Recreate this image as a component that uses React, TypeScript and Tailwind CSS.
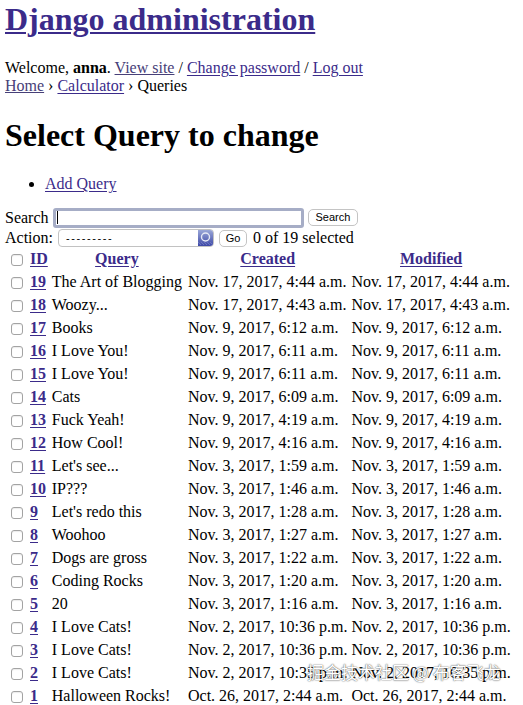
import React from 'react';

const rows: [number, string, string, string][] = [
  [19, 'The Art of Blogging', 'Nov. 17, 2017, 4:44 a.m.', 'Nov. 17, 2017, 4:44 a.m.'],
  [18, 'Woozy...', 'Nov. 17, 2017, 4:43 a.m.', 'Nov. 17, 2017, 4:43 a.m.'],
  [17, 'Books', 'Nov. 9, 2017, 6:12 a.m.', 'Nov. 9, 2017, 6:12 a.m.'],
  [16, 'I Love You!', 'Nov. 9, 2017, 6:11 a.m.', 'Nov. 9, 2017, 6:11 a.m.'],
  [15, 'I Love You!', 'Nov. 9, 2017, 6:11 a.m.', 'Nov. 9, 2017, 6:11 a.m.'],
  [14, 'Cats', 'Nov. 9, 2017, 6:09 a.m.', 'Nov. 9, 2017, 6:09 a.m.'],
  [13, 'Fuck Yeah!', 'Nov. 9, 2017, 4:19 a.m.', 'Nov. 9, 2017, 4:19 a.m.'],
  [12, 'How Cool!', 'Nov. 9, 2017, 4:16 a.m.', 'Nov. 9, 2017, 4:16 a.m.'],
  [11, "Let's see...", 'Nov. 3, 2017, 1:59 a.m.', 'Nov. 3, 2017, 1:59 a.m.'],
  [10, 'IP???', 'Nov. 3, 2017, 1:46 a.m.', 'Nov. 3, 2017, 1:46 a.m.'],
  [9, "Let's redo this", 'Nov. 3, 2017, 1:28 a.m.', 'Nov. 3, 2017, 1:28 a.m.'],
  [8, 'Woohoo', 'Nov. 3, 2017, 1:27 a.m.', 'Nov. 3, 2017, 1:27 a.m.'],
  [7, 'Dogs are gross', 'Nov. 3, 2017, 1:22 a.m.', 'Nov. 3, 2017, 1:22 a.m.'],
  [6, 'Coding Rocks', 'Nov. 3, 2017, 1:20 a.m.', 'Nov. 3, 2017, 1:20 a.m.'],
  [5, '20', 'Nov. 3, 2017, 1:16 a.m.', 'Nov. 3, 2017, 1:16 a.m.'],
  [4, 'I Love Cats!', 'Nov. 2, 2017, 10:36 p.m.', 'Nov. 2, 2017, 10:36 p.m.'],
  [3, 'I Love Cats!', 'Nov. 2, 2017, 10:36 p.m.', 'Nov. 2, 2017, 10:36 p.m.'],
  [2, 'I Love Cats!', 'Nov. 2, 2017, 10:35 p.m.', 'Nov. 2, 2017, 10:35 p.m.'],
  [1, 'Halloween Rocks!', 'Oct. 26, 2017, 2:44 a.m.', 'Oct. 26, 2017, 2:44 a.m.'],
];

const link = 'text-[#3b2b8a] underline underline-offset-[2px]';

function Check() {
  return (
    <span className="inline-block align-middle w-[12px] h-[12px] ml-[5px] mr-[3px] rounded-[3px] border border-[#a3a3a3] bg-white shadow-[inset_0_1px_1px_rgba(0,0,0,0.08)]" />
  );
}

export default function App() {
  return (
    <div className="relative min-h-[705px] bg-white px-[5px] font-['Liberation_Serif',serif] text-[16px] leading-[18px] text-black overflow-hidden">
      <h1 className="text-[32px] leading-[38px] font-bold pt-0">
        <a className={`${link} decoration-[2px]`}>Django administration</a>
      </h1>

      <div className="mt-[21px]">
        Welcome, <strong>anna</strong>. <a className="text-[#474078] underline">View site</a> /{' '}
        <a className={link}>Change password</a> / <a className={link}>Log out</a>
      </div>
      <div>
        <a className="text-[#474078] underline">Home</a> › <a className={link}>Calculator</a> › Queries
      </div>

      <h1 className="mt-[21px] text-[32px] leading-[38px] font-bold">Select Query to change</h1>

      <ul className="mt-[21px] pl-[40px] list-disc">
        <li>
          <a className={link}>Add Query</a>
        </li>
      </ul>

      <div className="mt-[14px] flex items-center h-[21px]">
        <span>Search</span>
        <div className="ml-[4px] w-[251px] h-[20px] rounded-[3px] border-[3px] border-[#a6adc6] bg-white flex items-center pl-[1px]">
          <span className="w-[1px] h-[13px] bg-black" />
        </div>
        <button className="ml-[4px] h-[17px] px-[7px] rounded-[5px] border border-[#c4c4c4] bg-white font-['Liberation_Sans',sans-serif] text-[11px] leading-[15px] text-black">
          Search
        </button>
      </div>

      <div className="flex items-center h-[20px]">
        <span>Action:</span>
        <div className="ml-[5px] w-[156px] h-[18px] rounded-[4px] border border-[#c2c2c2] bg-white flex items-center overflow-hidden">
          <span className="flex-1 pl-[7px] font-['Liberation_Sans',sans-serif] text-[11px] leading-[14px] tracking-[1.6px]">---------</span>
          <svg width="15" height="16" viewBox="0 0 15 16" className="shrink-0">
            <defs>
              <linearGradient id="sg" x1="0" y1="0" x2="0" y2="1">
                <stop offset="0" stopColor="#9aa7d8" />
                <stop offset="1" stopColor="#3d48a6" />
              </linearGradient>
            </defs>
            <rect width="15" height="16" fill="url(#sg)" />
            <circle cx="7.5" cy="7" r="4" fill="none" stroke="#e6e9f5" strokeWidth="1.4" />
            <path d="M0 12 L3 15 M3 12 L6 15 M6 12 L9 15 M9 12 L12 15 M12 12 L15 15" stroke="#6a74c0" strokeWidth="1" />
          </svg>
        </div>
        <button className="ml-[5px] h-[17px] w-[28px] rounded-[5px] border border-[#c4c4c4] bg-white font-['Liberation_Sans',sans-serif] text-[11px] leading-[15px]">
          Go
        </button>
        <span className="ml-[6px]">0 of 19 selected</span>
      </div>

      <table className="border-separate border-spacing-[2px] -ml-[2px] -mt-[2px]">
        <thead>
          <tr className="h-[21px]">
            <th className="px-[1px] text-left">
              <Check />
            </th>
            <th className="px-[1px] font-bold">
              <a className={link}>ID</a>
            </th>
            <th className="pl-[1px] pr-[3px] font-bold">
              <a className={link}>Query</a>
            </th>
            <th className="px-[1px] font-bold">
              <a className={link}>Created</a>
            </th>
            <th className="px-[1px] font-bold">
              <a className={link}>Modified</a>
            </th>
          </tr>
        </thead>
        <tbody>
          {rows.map(([id, q, c, m]) => (
            <tr key={id} className="h-[21px]">
              <td className="px-[1px]">
                <Check />
              </td>
              <th className="px-[1px] font-bold text-left">
                <a className={link}>{id}</a>
              </th>
              <td className="pl-[1px] pr-[3px] whitespace-nowrap">{q}</td>
              <td className="px-[1px] whitespace-nowrap">{c}</td>
              <td className="px-[1px] whitespace-nowrap">{m}</td>
            </tr>
          ))}
        </tbody>
      </table>

      <div className="absolute left-[307px] top-[661px] font-['Noto_Sans_CJK_SC',sans-serif] text-[17px] leading-[22px] text-white [text-shadow:0_0_1px_rgba(0,0,0,0.7),0_0_2px_rgba(0,0,0,0.4)] pointer-events-none">
        掘金技术社区 @ 布客飞龙
      </div>
    </div>
  );
}
